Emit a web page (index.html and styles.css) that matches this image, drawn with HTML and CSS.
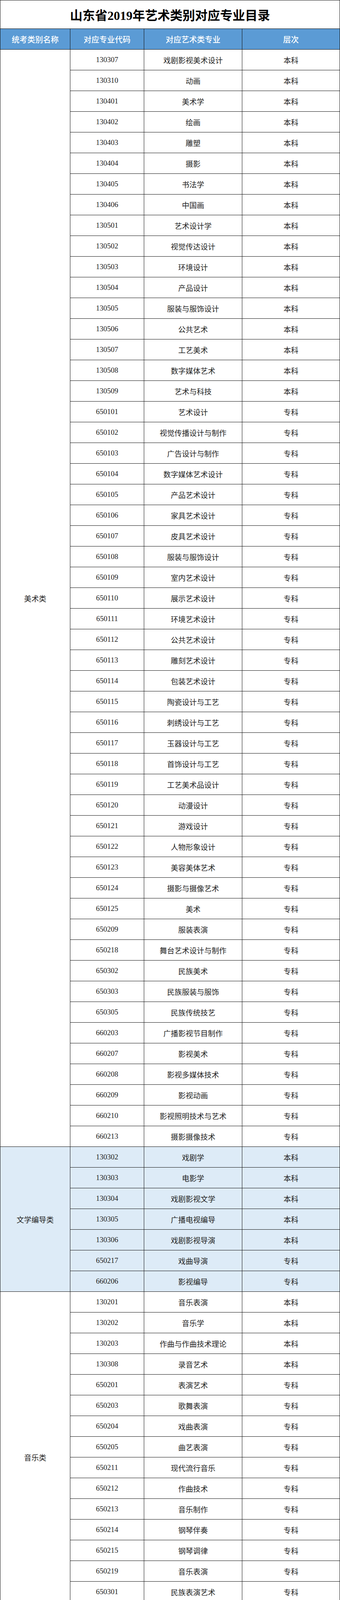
FILE: index.html
```html
<!DOCTYPE html>
<html lang="zh-CN">
<head>
<meta charset="utf-8">
<title>山东省2019年艺术类别对应专业目录</title>
<link rel="stylesheet" href="styles.css">
</head>
<body>
<div class="page">
  <div class="title">山东省2019年艺术类别对应专业目录</div>
  <div class="head">
    <span>统考类别名称</span><span>对应专业代码</span><span>对应艺术类专业</span><span>层次</span>
  </div>

  <div class="group">
    <div class="cat">美术类</div>
    <div class="rows">
      <div class="row"><span>130307</span><span>戏剧影视美术设计</span><span>本科</span></div>
      <div class="row"><span>130310</span><span>动画</span><span>本科</span></div>
      <div class="row"><span>130401</span><span>美术学</span><span>本科</span></div>
      <div class="row"><span>130402</span><span>绘画</span><span>本科</span></div>
      <div class="row"><span>130403</span><span>雕塑</span><span>本科</span></div>
      <div class="row"><span>130404</span><span>摄影</span><span>本科</span></div>
      <div class="row"><span>130405</span><span>书法学</span><span>本科</span></div>
      <div class="row"><span>130406</span><span>中国画</span><span>本科</span></div>
      <div class="row"><span>130501</span><span>艺术设计学</span><span>本科</span></div>
      <div class="row"><span>130502</span><span>视觉传达设计</span><span>本科</span></div>
      <div class="row"><span>130503</span><span>环境设计</span><span>本科</span></div>
      <div class="row"><span>130504</span><span>产品设计</span><span>本科</span></div>
      <div class="row"><span>130505</span><span>服装与服饰设计</span><span>本科</span></div>
      <div class="row"><span>130506</span><span>公共艺术</span><span>本科</span></div>
      <div class="row"><span>130507</span><span>工艺美术</span><span>本科</span></div>
      <div class="row"><span>130508</span><span>数字媒体艺术</span><span>本科</span></div>
      <div class="row"><span>130509</span><span>艺术与科技</span><span>本科</span></div>
      <div class="row"><span>650101</span><span>艺术设计</span><span>专科</span></div>
      <div class="row"><span>650102</span><span>视觉传播设计与制作</span><span>专科</span></div>
      <div class="row"><span>650103</span><span>广告设计与制作</span><span>专科</span></div>
      <div class="row"><span>650104</span><span>数字媒体艺术设计</span><span>专科</span></div>
      <div class="row"><span>650105</span><span>产品艺术设计</span><span>专科</span></div>
      <div class="row"><span>650106</span><span>家具艺术设计</span><span>专科</span></div>
      <div class="row"><span>650107</span><span>皮具艺术设计</span><span>专科</span></div>
      <div class="row"><span>650108</span><span>服装与服饰设计</span><span>专科</span></div>
      <div class="row"><span>650109</span><span>室内艺术设计</span><span>专科</span></div>
      <div class="row"><span>650110</span><span>展示艺术设计</span><span>专科</span></div>
      <div class="row"><span>650111</span><span>环境艺术设计</span><span>专科</span></div>
      <div class="row"><span>650112</span><span>公共艺术设计</span><span>专科</span></div>
      <div class="row"><span>650113</span><span>雕刻艺术设计</span><span>专科</span></div>
      <div class="row"><span>650114</span><span>包装艺术设计</span><span>专科</span></div>
      <div class="row"><span>650115</span><span>陶瓷设计与工艺</span><span>专科</span></div>
      <div class="row"><span>650116</span><span>刺绣设计与工艺</span><span>专科</span></div>
      <div class="row"><span>650117</span><span>玉器设计与工艺</span><span>专科</span></div>
      <div class="row"><span>650118</span><span>首饰设计与工艺</span><span>专科</span></div>
      <div class="row"><span>650119</span><span>工艺美术品设计</span><span>专科</span></div>
      <div class="row"><span>650120</span><span>动漫设计</span><span>专科</span></div>
      <div class="row"><span>650121</span><span>游戏设计</span><span>专科</span></div>
      <div class="row"><span>650122</span><span>人物形象设计</span><span>专科</span></div>
      <div class="row"><span>650123</span><span>美容美体艺术</span><span>专科</span></div>
      <div class="row"><span>650124</span><span>摄影与摄像艺术</span><span>专科</span></div>
      <div class="row"><span>650125</span><span>美术</span><span>专科</span></div>
      <div class="row"><span>650209</span><span>服装表演</span><span>专科</span></div>
      <div class="row"><span>650218</span><span>舞台艺术设计与制作</span><span>专科</span></div>
      <div class="row"><span>650302</span><span>民族美术</span><span>专科</span></div>
      <div class="row"><span>650303</span><span>民族服装与服饰</span><span>专科</span></div>
      <div class="row"><span>650305</span><span>民族传统技艺</span><span>专科</span></div>
      <div class="row"><span>660203</span><span>广播影视节目制作</span><span>专科</span></div>
      <div class="row"><span>660207</span><span>影视美术</span><span>专科</span></div>
      <div class="row"><span>660208</span><span>影视多媒体技术</span><span>专科</span></div>
      <div class="row"><span>660209</span><span>影视动画</span><span>专科</span></div>
      <div class="row"><span>660210</span><span>影视照明技术与艺术</span><span>专科</span></div>
      <div class="row"><span>660213</span><span>摄影摄像技术</span><span>专科</span></div>
    </div>
  </div>

  <div class="group alt">
    <div class="cat">文学编导类</div>
    <div class="rows">
      <div class="row"><span>130302</span><span>戏剧学</span><span>本科</span></div>
      <div class="row"><span>130303</span><span>电影学</span><span>本科</span></div>
      <div class="row"><span>130304</span><span>戏剧影视文学</span><span>本科</span></div>
      <div class="row"><span>130305</span><span>广播电视编导</span><span>本科</span></div>
      <div class="row"><span>130306</span><span>戏剧影视导演</span><span>本科</span></div>
      <div class="row"><span>650217</span><span>戏曲导演</span><span>专科</span></div>
      <div class="row"><span>660206</span><span>影视编导</span><span>专科</span></div>
    </div>
  </div>

  <div class="group">
    <div class="cat">音乐类</div>
    <div class="rows">
      <div class="row"><span>130201</span><span>音乐表演</span><span>本科</span></div>
      <div class="row"><span>130202</span><span>音乐学</span><span>本科</span></div>
      <div class="row"><span>130203</span><span>作曲与作曲技术理论</span><span>本科</span></div>
      <div class="row"><span>130308</span><span>录音艺术</span><span>本科</span></div>
      <div class="row"><span>650201</span><span>表演艺术</span><span>专科</span></div>
      <div class="row"><span>650203</span><span>歌舞表演</span><span>专科</span></div>
      <div class="row"><span>650204</span><span>戏曲表演</span><span>专科</span></div>
      <div class="row"><span>650205</span><span>曲艺表演</span><span>专科</span></div>
      <div class="row"><span>650211</span><span>现代流行音乐</span><span>专科</span></div>
      <div class="row"><span>650212</span><span>作曲技术</span><span>专科</span></div>
      <div class="row"><span>650213</span><span>音乐制作</span><span>专科</span></div>
      <div class="row"><span>650214</span><span>钢琴伴奏</span><span>专科</span></div>
      <div class="row"><span>650215</span><span>钢琴调律</span><span>专科</span></div>
      <div class="row"><span>650219</span><span>音乐表演</span><span>专科</span></div>
      <div class="row"><span>650301</span><span>民族表演艺术</span><span>专科</span></div>
      <div class="row"><span>660212</span><span>录音技术与艺术</span><span>专科</span></div>
    </div>
  </div>

  <div class="group alt">
    <div class="cat">舞蹈类</div>
    <div class="rows">
      <div class="row"><span>130204</span><span>舞蹈表演</span><span>本科</span></div>
      <div class="row"><span>130205</span><span>舞蹈学</span><span>本科</span></div>
      <div class="row"><span>130206</span><span>舞蹈编导</span><span>本科</span></div>
      <div class="row"><span>650201</span><span>表演艺术</span><span>专科</span></div>
      <div class="row"><span>650203</span><span>歌舞表演</span><span>专科</span></div>
      <div class="row"><span>650207</span><span>舞蹈表演</span><span>专科</span></div>
      <div class="row"><span>650208</span><span>国际标准舞</span><span>专科</span></div>
      <div class="row"><span>650216</span><span>舞蹈编导</span><span>专科</span></div>
      <div class="row"><span>650301</span><span>民族表演艺术</span><span>专科</span></div>
    </div>
  </div>

  <div class="group">
    <div class="cat">播音主持类</div>
    <div class="rows">
      <div class="row"><span>130309</span><span>播音与主持艺术</span><span>本科</span></div>
      <div class="row"><span>660202</span><span>播音与主持</span><span>专科</span></div>
    </div>
  </div>

  <div class="group alt">
    <div class="cat">摄影类</div>
    <div class="rows">
      <div class="row"><span>130311</span><span>影视摄影与制作</span><span>本科</span></div>
      <div class="row"><span>130404</span><span>摄影</span><span>本科</span></div>
      <div class="row"><span>130508</span><span>数字媒体艺术</span><span>本科</span></div>
      <div class="row"><span>660213</span><span>摄影摄像技术</span><span>专科</span></div>
    </div>
  </div>

  <div class="group">
    <div class="cat">影视戏剧表演类</div>
    <div class="rows">
      <div class="row"><span>130301</span><span>表演</span><span>本科</span></div>
      <div class="row"><span>650201</span><span>表演艺术</span><span>专科</span></div>
      <div class="row"><span>650202</span><span>戏剧影视表演</span><span>专科</span></div>
      <div class="row"><span>650204</span><span>戏曲表演</span><span>专科</span></div>
      <div class="row"><span>650205</span><span>曲艺表演</span><span>专科</span></div>
      <div class="row"><span>650206</span><span>音乐剧表演</span><span>专科</span></div>
      <div class="row"><span>650301</span><span>民族表演艺术</span><span>专科</span></div>
    </div>
  </div>

  <div class="group alt">
    <div class="cat">服装表演类</div>
    <div class="rows">
      <div class="row"><span>130301</span><span>表演</span><span>本科</span></div>
      <div class="row"><span>650209</span><span>服装表演</span><span>专科</span></div>
      <div class="row"><span>650210</span><span>模特与礼仪</span><span>专科</span></div>
    </div>
  </div>

  <div class="group">
    <div class="cat">书法类</div>
    <div class="rows">
      <div class="row"><span>130405</span><span>书法学</span><span>本科</span></div>
    </div>
  </div>

  <div class="note">注：根据教育部普通高校本、专科专业目录，结合我省艺术类别划分情况制定对应专业目录，若有附件中未涵盖的专业，请有关高校与山东省教育招生考试院协商后，确定专业所属类别。</div>
</div>
</body>
</html>
```

FILE: styles.css
```css
* {
  box-sizing: border-box;
}

html, body {
  margin: 0;
  padding: 0;
  background: #ffffff;
}

.page {
  width: 870px;
  font-family: "Liberation Serif", "Noto Sans CJK SC", serif;
  font-size: 19px;
  color: #222222;
}

.title {
  height: 74px;
  border: 1px solid #111111;
  display: flex;
  align-items: center;
  justify-content: center;
  font-family: "Liberation Serif", "Noto Sans CJK SC", serif;
  font-weight: bold;
  font-size: 32px;
  color: #000000;
}

.head {
  display: grid;
  grid-template-columns: 180px 189px 251px 250px;
  height: 53px;
  background: #5b9bd5;
  font-family: "Noto Sans CJK SC", sans-serif;
  font-size: 20px;
  font-weight: 500;
  color: #ffffff;
}

.head span {
  display: flex;
  align-items: center;
  justify-content: center;
  border-right: 1px solid #111111;
  border-bottom: 1px solid #111111;
}

.head span:first-child {
  border-left: 1px solid #111111;
}

.group {
  display: flex;
}

.group.alt {
  background: #ddebf7;
}

.cat {
  flex: none;
  width: 180px;
  display: flex;
  align-items: center;
  justify-content: center;
  border-left: 1px solid #111111;
  border-right: 1px solid #111111;
  border-bottom: 1px solid #111111;
  font-family: "Noto Sans CJK SC", sans-serif;
}

.rows {
  flex: 1;
}

.row {
  display: grid;
  grid-template-columns: 189px 251px 250px;
  height: 53px;
}

.row span {
  display: flex;
  align-items: center;
  justify-content: center;
  border-right: 1px solid #111111;
  border-bottom: 1px solid #111111;
}

.row span:nth-child(2),
.row span:nth-child(3) {
  font-family: "Noto Sans CJK SC", sans-serif;
}

.note {
  height: 97px;
  border-top: 1px solid #111111;
  border-left: 1px solid #cfcfcf;
  border-right: 1px solid #cfcfcf;
  border-bottom: 1px solid #cfcfcf;
  padding: 19px 6px 0 6px;
  font-family: "Noto Sans CJK SC", sans-serif;
  font-size: 16px;
  line-height: 27px;
  letter-spacing: 3.8px;
  color: #333333;
}
```
